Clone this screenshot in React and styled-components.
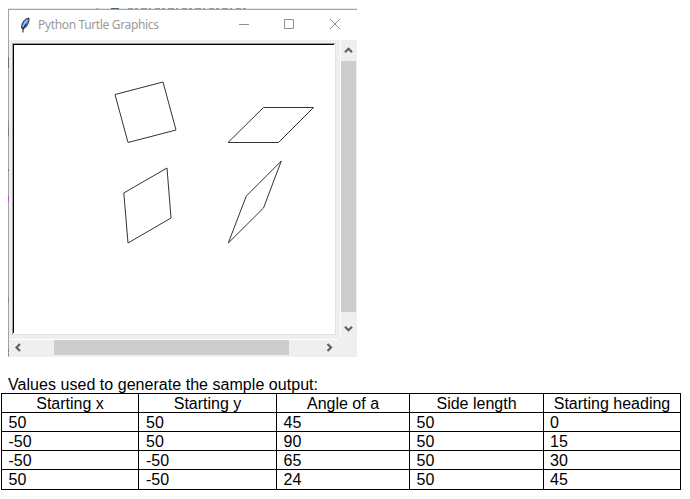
import React from "react";
import styled, { createGlobalStyle } from "styled-components";

const GlobalStyle = createGlobalStyle`
  body { margin: 0; background: #fff; overflow: hidden; }
  * { box-sizing: border-box; }
`;

const Page = styled.main`
  width: 690px;
  height: 499px;
  padding-top: 8px;
  background: #fff;
  color: #000;
  font-family: "Liberation Sans", Arial, sans-serif;
`;

const Backdrop = styled.svg`
  display: block;
  width: 349px;
  height: 1px;
  margin-left: 8px;
`;

const Window = styled.section`
  width: 349px;
  height: 348px;
  margin-left: 8px;
  border-top: 1px solid #a3a3a3;
  display: grid;
  grid-template-columns: 1px 1fr;
  background: #efefef;
`;

const Edge = styled.div`
  background: linear-gradient(
    #a3a3a3 0 47px, #558060 47px 50px, #5b7191 50px 58px, #a3a3a3 58px 71px,
    #b39a9a 71px 75px, #a3a3a3 75px 111px, #7290aa 111px 118px, #777 118px 125px,
    #7290aa 125px 127px, #a3a3a3 127px 159px, #777 159px 161px, #a3a3a3 161px 186px,
    #bd52bd 186px 191px, #a3a3a3 191px 287px, #6f9b77 287px 293px,
    #a3a3a3 293px 339px, #6b8b62 339px 342px, #a3a3a3 342px 344px, #258a68 344px 345px, #a3a3a3 345px
  );
`;

const WindowBody = styled.div`
  min-width: 0;
`;

const TitleBar = styled.header`
  height: 30px;
  background: #fff;
  display: flex;
  align-items: center;
  padding-left: 10px;
`;

const Feather = styled.svg`
  width: 12px;
  height: 18px;
  flex: none;
`;

const Title = styled.h1`
  margin: 0 0 0 7px;
  flex: 1;
  font: 400 12px/18px "Noto Sans", sans-serif;
  letter-spacing: -0.35px;
  color: #999;
  white-space: nowrap;
`;

const Controls = styled.svg`
  width: 120px;
  height: 30px;
  flex: none;
`;

const Workspace = styled.div`
  display: grid;
  grid-template-columns: 331px 17px;
  grid-template-rows: 299px 18px;
`;

const Canvas = styled.div`
  margin: 3px 0 0 3px;
  width: 324px;
  height: 292px;
  background: #fff;
  border: 1px solid #a0a0a0;
  border-right-color: #e3e3e3;
  border-bottom-color: #e3e3e3;
`;

const Drawing = styled.svg`
  display: block;
  width: 322px;
  height: 290px;
`;

const VerticalScroll = styled.div`
  height: 296px;
  margin-top: 1px;
  border-left: 1px solid #fff;
  display: grid;
  grid-template-rows: 20px 251px 25px;
`;

const HorizontalScroll = styled.div`
  width: 328px;
  margin-left: 1px;
  border-top: 1px solid #fff;
  display: grid;
  grid-template-columns: 44px 235px 49px;
`;

const Thumb = styled.div`
  width: ${(p) => (p.$vertical ? "15px" : "auto")};
  height: ${(p) => (p.$vertical ? "auto" : "15px")};
  background: #cdcdcd;
`;

const Arrow = styled.svg`
  display: block;
  width: ${(p) => p.$w}px;
  height: ${(p) => p.$h}px;
  fill: none;
  stroke: #606060;
  stroke-width: 2.2;
`;

const Caption = styled.p`
  margin: 19px 0 0 8px;
  height: 17px;
  font-size: 16px;
  line-height: 18px;
  letter-spacing: 0.04px;
  white-space: nowrap;
`;

const Table = styled.table`
  margin-left: 1px;
  width: 680px;
  table-layout: fixed;
  border-collapse: separate;
  border-spacing: 0;
  border-left: 1px solid #000;
  border-top: 1px solid #000;
  font-size: 16px;
  line-height: 16px;
`;

const Col = styled.col`
  width: ${(p) => p.$w}px;
`;

const Row = styled.tr`
  height: ${(p) => (p.$last ? 20 : 19)}px;
`;

const Heading = styled.th`
  padding: 2px 0 0;
  font-weight: 400;
  text-align: center;
  vertical-align: top;
  white-space: nowrap;
  border-right: 1px solid #000;
  border-bottom: 1px solid #000;
`;

const Cell = styled.td`
  padding: 2px 0 0 ${(p) => p.$pad}px;
  vertical-align: top;
  border-right: 1px solid #000;
  border-bottom: 1px solid #000;
`;

const widths = [137, 138, 133, 134, 137];
const pads = [6.5, 7, 6.5, 6.5, 6];
const headings = ["Starting x", "Starting y", "Angle of a", "Side length", "Starting heading"];
const rows = [
  [50, 50, 45, 50, 0],
  [-50, 50, 90, 50, 15],
  [-50, -50, 65, 50, 30],
  [50, -50, 24, 50, 45],
];
const shapes = [
  "115,94.5 163,82 176,130 128,142.5",
  "228,142.5 263.5,107.5 313.5,107.5 278.5,142.5",
  "123.8,193 167,168 171,218 128,243",
  "228.3,243 246.3,196 281.3,161 263.5,208",
];

export default function App() {
  return (
    <>
      <GlobalStyle />
      <Page>
        <Backdrop viewBox="0 0 349 1">
          <path d="M0 .5H349" stroke="#e8e8e8" />
          <path d="M88 .5H91" stroke="#bbb" />
          <path d="M103 .5H111" stroke="#47627b" />
          <path d="M120 .5H241" stroke="#999" strokeDasharray="5 2 3 3 6 2 2 4" />
        </Backdrop>
        <Window>
          <Edge />
          <WindowBody>
            <TitleBar>
              <Feather viewBox="0 0 12 18">
                <path d="M10 2C6 2.5 2.5 6 2.5 12L4 13C8 11.5 10.5 6 10 2Z" fill="#4a86d0" stroke="#1d2a3c" strokeWidth="0.9" />
                <path d="M8.3 4C6.2 6 5 8 4.2 11" fill="none" stroke="#a9cef6" strokeWidth="1.2" />
                <path d="M7 8L4 12.5V16.5" fill="none" stroke="#111" strokeWidth="1" />
              </Feather>
              <Title>Python Turtle Graphics</Title>
              <Controls viewBox="0 0 120 30" fill="none" stroke="#8f8f8f">
                <path d="M2 14.5H12" />
                <path d="M47.5 9.5H56.5V18.5H47.5Z" />
                <path d="M93 9L103 19M103 9L93 19" />
              </Controls>
            </TitleBar>
            <Workspace>
              <Canvas>
                <Drawing viewBox="13 44 322 290">
                  <path d="M13 44.5H334M13.5 44V333" fill="none" stroke="#000" />
                  {shapes.map((points) => (
                    <polygon key={points} points={points} fill="none" stroke="#333" strokeWidth="1" />
                  ))}
                </Drawing>
              </Canvas>
              <VerticalScroll>
                <Arrow $w={15} $h={20} viewBox="0 0 15 20"><path d="M4 11.3L7.5 7.8L11 11.3" /></Arrow>
                <Thumb $vertical />
                <Arrow $w={15} $h={25} viewBox="0 0 15 25"><path d="M4 14.7L7.5 18.2L11 14.7" /></Arrow>
              </VerticalScroll>
              <HorizontalScroll>
                <Arrow $w={44} $h={15} viewBox="0 0 44 15"><path d="M10 4L6.5 7.5L10 11" /></Arrow>
                <Thumb />
                <Arrow $w={49} $h={15} viewBox="0 0 49 15"><path d="M38.5 4L42 7.5L38.5 11" /></Arrow>
              </HorizontalScroll>
            </Workspace>
          </WindowBody>
        </Window>
        <Caption>Values used to generate the sample output:</Caption>
        <Table>
          <colgroup>{widths.map((w, i) => <Col key={i} $w={w} />)}</colgroup>
          <thead>
            <Row>{headings.map((h) => <Heading key={h}>{h}</Heading>)}</Row>
          </thead>
          <tbody>
            {rows.map((row, r) => (
              <Row key={r} $last={r === rows.length - 1}>
                {row.map((value, c) => <Cell key={c} $pad={pads[c]}>{value}</Cell>)}
              </Row>
            ))}
          </tbody>
        </Table>
      </Page>
    </>
  );
}
